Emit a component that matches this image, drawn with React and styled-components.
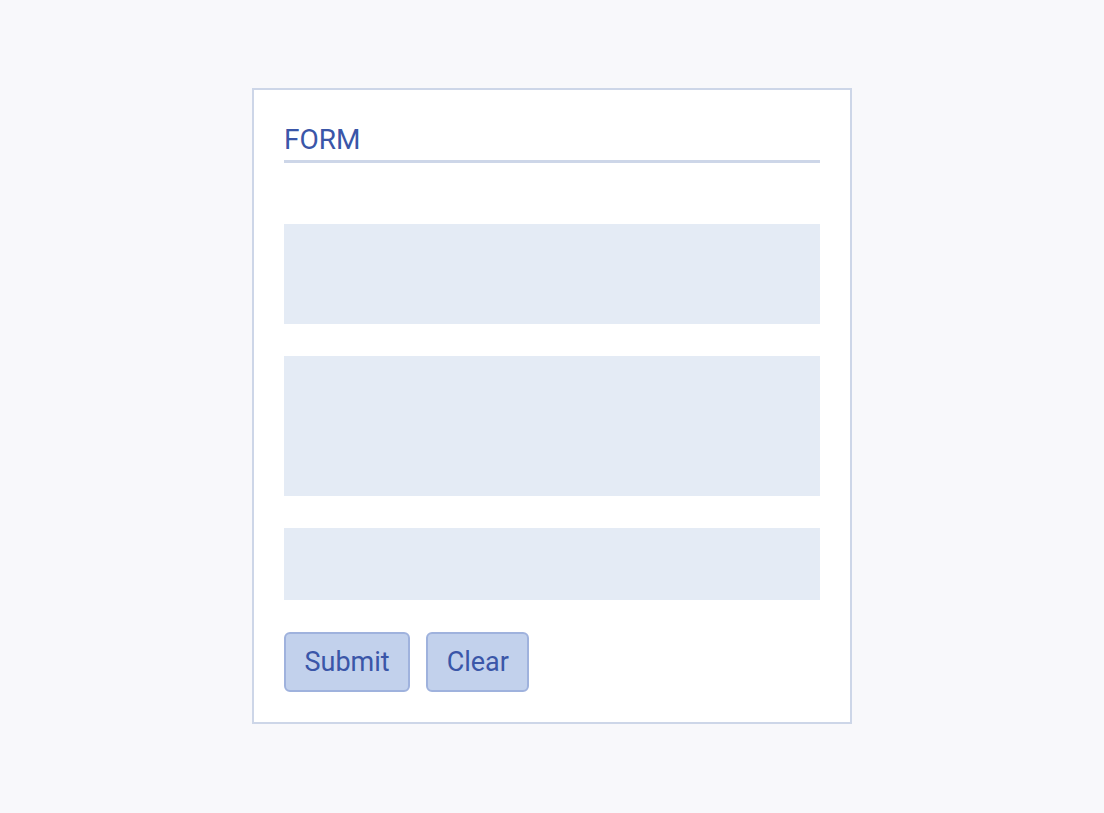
import styled, { createGlobalStyle } from 'styled-components'

const Global = createGlobalStyle`
body{
    margin: 0;
    background: #f8f8fb;
    font-family: Roboto, "Liberation Sans", sans-serif;
}
`
const Page = styled.div`
min-height: 813px;
display: flex;
justify-content: center;
padding-top: 88px;
box-sizing: border-box;
`
const Card = styled.form`
width: 600px;
box-sizing: border-box;
background: #fff;
border: 2px solid #cdd6e8;
padding: 30px;
display: flex;
flex-direction: column;
align-self: flex-start;
`
const Title = styled.h2`
margin: 0 0 61px;
font-weight: 400;
font-size: 28px;
line-height: 34px;
padding: 3px 0 3px;
color: #3a56a8;
border-bottom: 3px solid #cdd6e8;
`
const Fields = styled.div`
display: flex;
flex-direction: column;
gap: 32px;
`
const Field = styled.div`
height: ${(p) => p.h}px;
background: #e4ebf5;
`
const Actions = styled.div`
display: flex;
gap: 16px;
margin-top: 32px;
`
const Button = styled.button`
height: 60px;
padding: 0 18.5px;
font-family: inherit;
font-size: 27px;
color: #3a56a8;
background: #c2d1ec;
border: 2px solid #9fb2dd;
border-radius: 6px;
`

const App = () => {
    return (
        <Page>
            <Global />
            <Card onSubmit={(e) => e.preventDefault()}>
                <Title>FORM</Title>
                <Fields>
                    <Field h={100} />
                    <Field h={140} />
                    <Field h={72} />
                </Fields>
                <Actions>
                    <Button>Submit</Button>
                    <Button type="button">Clear</Button>
                </Actions>
            </Card>
        </Page>
    )
}
export default App
